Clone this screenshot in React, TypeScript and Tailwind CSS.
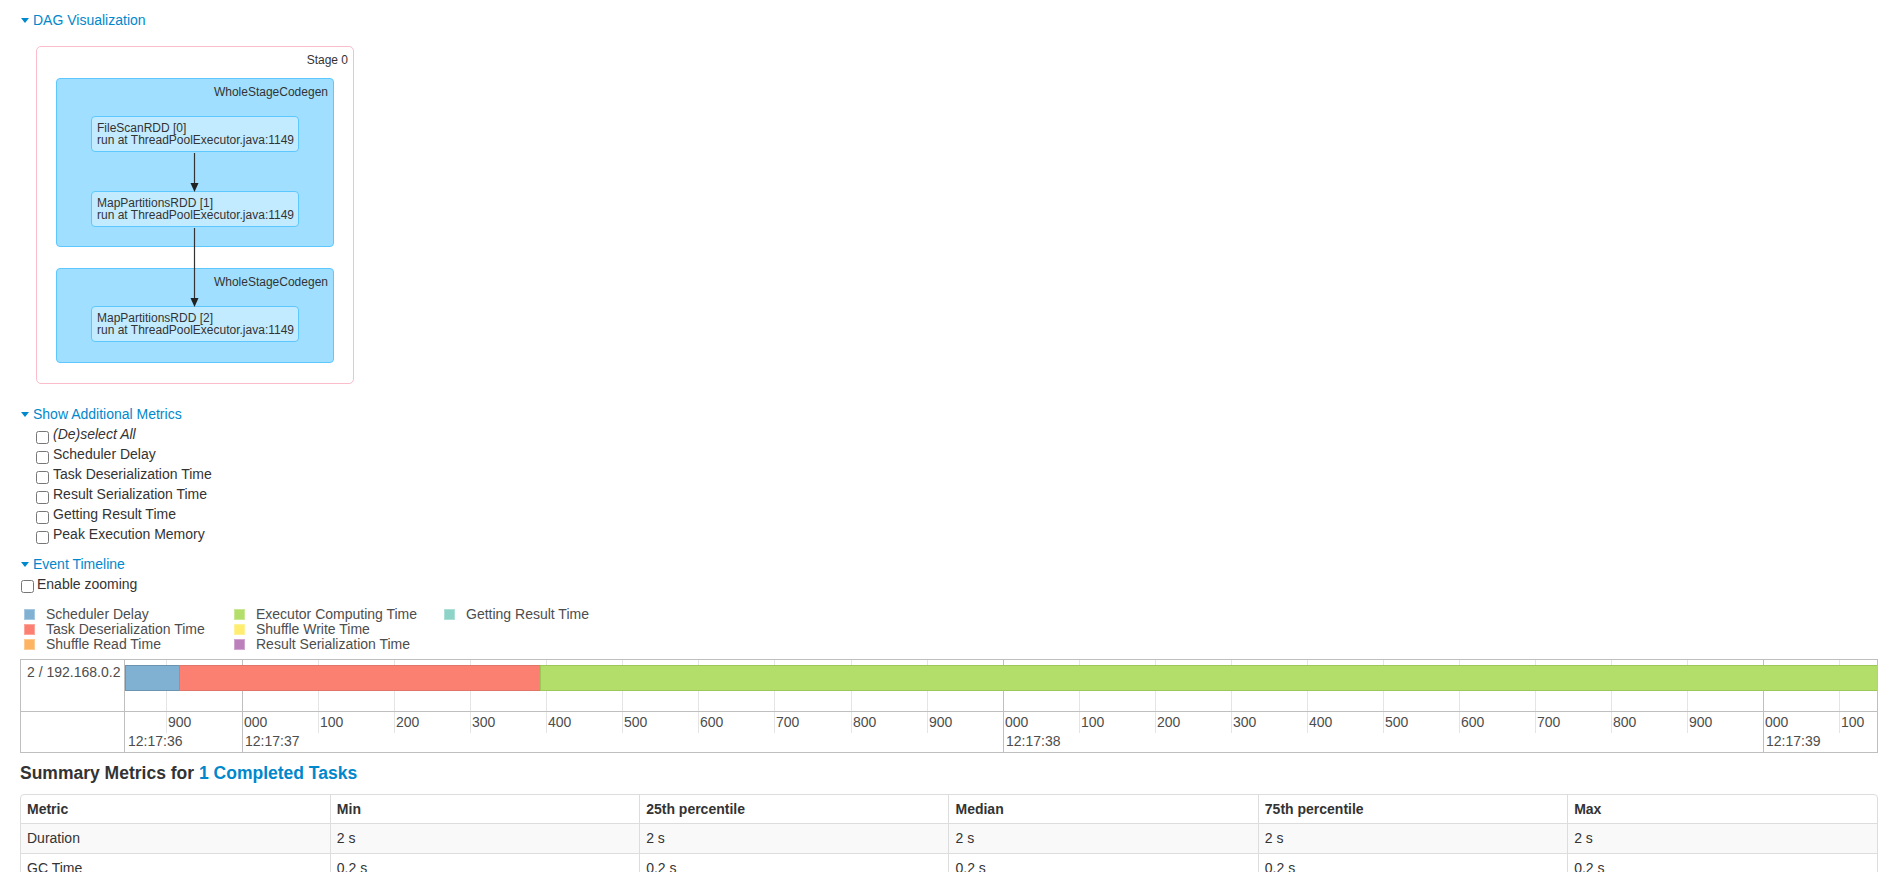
import React from 'react';

const PX_PER_MS = 0.7605;
const T0 = 36846;
const xOf = (ms: number) => (ms - T0) * PX_PER_MS;

const ticks = Array.from({ length: 23 }, (_, i) => 36900 + i * 100);

const majorLabels = [
  { x: 3, text: '12:17:36' },
  { x: xOf(37000) + 3, text: '12:17:37' },
  { x: xOf(38000) + 3, text: '12:17:38' },
  { x: xOf(39000) + 3, text: '12:17:39' },
];

const bars = [
  { from: 0, to: 54, cls: 'bg-[#80b1d3] border-[#6b94b0]' },
  { from: 54, to: 415, cls: 'bg-[#fb8072] border-[#e0766a]' },
  { from: 415, to: 1760, cls: 'bg-[#b3de69] border-[#9cc85a]' },
];

const legend = [
  [
    { label: 'Scheduler Delay', cls: 'bg-[#80b1d3] border-[#a6c8e0]' },
    { label: 'Task Deserialization Time', cls: 'bg-[#fb8072] border-[#fca69c]' },
    { label: 'Shuffle Read Time', cls: 'bg-[#fdb462] border-[#fdcb91]' },
  ],
  [
    { label: 'Executor Computing Time', cls: 'bg-[#b3de69] border-[#cae796]' },
    { label: 'Shuffle Write Time', cls: 'bg-[#ffed6f] border-[#fff29a]' },
    { label: 'Result Serialization Time', cls: 'bg-[#bc80bd] border-[#d0a6d1]' },
  ],
  [{ label: 'Getting Result Time', cls: 'bg-[#8dd3c7] border-[#afe0d8]' }],
];

const metrics = [
  'Scheduler Delay',
  'Task Deserialization Time',
  'Result Serialization Time',
  'Getting Result Time',
  'Peak Execution Memory',
];

const columns = ['Metric', 'Min', '25th percentile', 'Median', '75th percentile', 'Max'];
const rows = [
  ['Duration', '2 s', '2 s', '2 s', '2 s', '2 s'],
  ['GC Time', '0.2 s', '0.2 s', '0.2 s', '0.2 s', '0.2 s'],
];

const SectionToggle: React.FC<{ title: string; className?: string }> = ({ title, className }) => (
  <div className={`flex items-center h-5 ${className ?? ''}`}>
    <span className="ml-[1px] w-0 h-0 border-l-[4.5px] border-r-[4.5px] border-t-[5px] border-l-transparent border-r-transparent border-t-[#0088cc]" />
    <a className="ml-[4px] text-[#0088cc] cursor-pointer">{title}</a>
  </div>
);

const RddNode: React.FC<{ name: string; className?: string }> = ({ name, className }) => (
  <div
    className={`ml-[34px] w-[208px] h-[36px] rounded-[4px] border border-[#5cc8ff] bg-[#c3ebff] pt-[5px] pl-[5px] text-[12px] leading-[12px] text-[#333] ${className ?? ''}`}
  >
    <div>{name}</div>
    <div>run at ThreadPoolExecutor.java:1149</div>
  </div>
);

const Codegen: React.FC<{ className: string; children: React.ReactNode }> = ({ className, children }) => (
  <div className={`relative w-[278px] rounded-[4px] border border-[#5cc8ff] bg-[#a0dfff] pt-[37px] ${className}`}>
    <div className="absolute right-[5px] top-[6px] text-[12px] leading-[14px] text-[#333]">WholeStageCodegen</div>
    {children}
  </div>
);

const Arrow: React.FC<{ x: number; y1: number; y2: number }> = ({ x, y1, y2 }) => (
  <g>
    <line x1={x} y1={y1} x2={x} y2={y2 - 8} stroke="#333" strokeWidth={1.2} />
    <polygon points={`${x - 4},${y2 - 9} ${x + 4},${y2 - 9} ${x},${y2}`} fill="#222" />
  </g>
);

function DagViz() {
  return (
    <div className="relative ml-4 mt-4 w-[318px] h-[338px] rounded-[5px] border border-[#fbbccb] bg-white pt-[31px] pl-[19px]">
      <div className="absolute right-[5px] top-[6px] text-[12px] leading-[14px] text-[#333]">Stage 0</div>
      <Codegen className="h-[169px]">
        <RddNode name="FileScanRDD [0]" />
        <RddNode name="MapPartitionsRDD [1]" className="mt-[39px]" />
      </Codegen>
      <Codegen className="h-[95px] mt-[21px]">
        <RddNode name="MapPartitionsRDD [2]" />
      </Codegen>
      <svg className="absolute left-0 top-0 pointer-events-none" width="316" height="336">
        <Arrow x={157.5} y1={106} y2={145} />
        <Arrow x={157.5} y1={181} y2={260} />
      </svg>
    </div>
  );
}

function Timeline() {
  return (
    <div className="mt-[7px] flex h-[94px] border border-[#bfbfbf] bg-white">
      <div className="w-[104px] shrink-0 border-r border-[#bfbfbf]">
        <div className="h-[52px] border-b border-[#bfbfbf] pl-[6px] pt-[5px] text-[14px] leading-[15px] text-[#4d4d4d]">
          2 / 192.168.0.2
        </div>
      </div>
      <div className="relative flex-1 flex flex-col overflow-hidden">
        <div className="relative h-[52px] shrink-0 border-b border-[#bfbfbf]">
          {ticks.map((ms) => (
            <div
              key={`g${ms}`}
              className={`absolute top-0 bottom-0 w-px ${ms % 1000 === 0 ? 'bg-[#bfbfbf]' : 'bg-[#e5e5e5]'}`}
              style={{ left: Math.round(xOf(ms)) }}
            />
          ))}
          {bars.map((b) => (
            <div
              key={b.from}
              className={`absolute top-[5px] h-[26px] border ${b.cls}`}
              style={{ left: b.from, width: b.to - b.from + 1 }}
            />
          ))}
        </div>
        <div className="relative flex-1 text-[14px] leading-[15px] text-[#4d4d4d]">
          {ticks.map((ms) => {
            const left = Math.round(xOf(ms));
            const major = ms % 1000 === 0;
            return (
              <React.Fragment key={`a${ms}`}>
                <div
                  className={`absolute top-0 w-px ${major ? 'bottom-0 bg-[#bfbfbf]' : 'h-[21px] bg-[#e5e5e5]'}`}
                  style={{ left }}
                />
                <div className="absolute top-[3px] whitespace-nowrap" style={{ left: left + 2 }}>
                  {String(ms % 1000).padStart(3, '0')}
                </div>
              </React.Fragment>
            );
          })}
          {majorLabels.map((l) => (
            <div key={l.text} className="absolute top-[22px] whitespace-nowrap" style={{ left: Math.round(l.x) }}>
              {l.text}
            </div>
          ))}
        </div>
      </div>
    </div>
  );
}

export default function App() {
  return (
    <div className="min-h-screen bg-white pl-5 pr-[9px] pt-[10px] text-[14px] leading-5 text-[#333] font-['Liberation_Sans',Arial,sans-serif]">
      <SectionToggle title="DAG Visualization" />
      <DagViz />

      <SectionToggle title="Show Additional Metrics" className="mt-5" />
      <div className="ml-4">
        <label className="flex h-5 items-start">
          <input type="checkbox" className="m-0 mt-[7px] w-[13px] h-[13px]" />
          <span className="ml-[4px] italic">(De)select All</span>
        </label>
        {metrics.map((m) => (
          <label key={m} className="flex h-5 items-start">
            <input type="checkbox" className="m-0 mt-[7px] w-[13px] h-[13px]" />
            <span className="ml-[4px]">{m}</span>
          </label>
        ))}
      </div>

      <SectionToggle title="Event Timeline" className="mt-[10px]" />
      <label className="flex h-5 items-start">
        <input type="checkbox" className="m-0 ml-[1px] mt-[6px] w-[13px] h-[13px]" />
        <span className="ml-[3px]">Enable zooming</span>
      </label>

      <div className="mt-[13px] ml-1 flex text-[14px] leading-[15px] text-[#4d4d4d]">
        {legend.map((col, i) => (
          <div key={i} className="w-[210px]">
            {col.map((item) => (
              <div key={item.label} className="flex items-center h-[15px]">
                <span className={`w-[11px] h-[11px] border ${item.cls}`} />
                <span className="ml-[11px]">{item.label}</span>
              </div>
            ))}
          </div>
        ))}
      </div>

      <Timeline />

      <h4 className="mt-[10px] text-[17.5px] leading-5 font-bold text-[#333]">
        Summary Metrics for <a className="text-[#0088cc] cursor-pointer">1 Completed Tasks</a>
      </h4>

      <div className="mt-[11px] rounded-t-[4px] border border-[#ddd] overflow-hidden">
        <table className="w-full table-fixed border-collapse text-[14px] leading-5">
          <thead>
            <tr>
              {columns.map((c, i) => (
                <th
                  key={c}
                  className={`h-[28px] px-[6px] text-left font-bold ${i > 0 ? 'border-l border-[#ddd]' : ''}`}
                >
                  {c}
                </th>
              ))}
            </tr>
          </thead>
          <tbody>
            {rows.map((r, ri) => (
              <tr key={r[0]} className={ri % 2 === 0 ? 'bg-[#f9f9f9]' : 'bg-white'}>
                {r.map((v, i) => (
                  <td
                    key={i}
                    className={`h-[30px] px-[6px] border-t border-[#ddd] ${i > 0 ? 'border-l' : ''}`}
                  >
                    {v}
                  </td>
                ))}
              </tr>
            ))}
          </tbody>
        </table>
      </div>
    </div>
  );
}
